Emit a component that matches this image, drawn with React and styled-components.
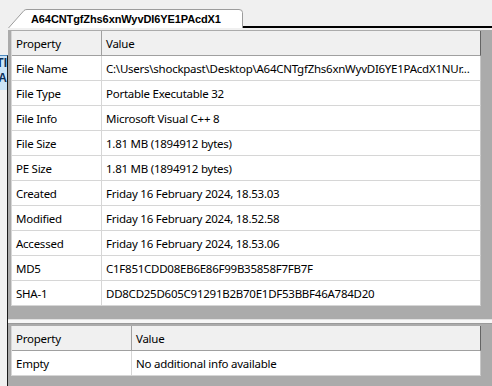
import React from 'react'
import styled, { createGlobalStyle } from 'styled-components'

const GlobalStyle = createGlobalStyle`
  html, body {
    margin: 0;
    padding: 0;
    background: #f0f0f0;
    overflow: hidden;
  }
  * { box-sizing: border-box; }
`

const rows = [
  ['File Name', 'C:\\Users\\shockpast\\Desktop\\A64CNTgfZhs6xnWyvDI6YE1PAcdX1NUr...'],
  ['File Type', 'Portable Executable 32'],
  ['File Info', 'Microsoft Visual C++ 8'],
  ['File Size', '1.81 MB (1894912 bytes)'],
  ['PE Size', '1.81 MB (1894912 bytes)'],
  ['Created', 'Friday 16 February 2024, 18.53.03'],
  ['Modified', 'Friday 16 February 2024, 18.52.58'],
  ['Accessed', 'Friday 16 February 2024, 18.53.06'],
  ['MD5', 'C1F851CDD08EB6E86F99B35858F7FB7F'],
  ['SHA-1', 'DD8CD25D605C91291B2B70E1DF53BBF46A784D20'],
]

const extra = [['Empty', 'No additional info available']]

export default function App() {
  return (
    <>
      <GlobalStyle />
      <Window>
        <LeftStrip>
          <StripSpacer />
          <HiddenPane>
            <HiddenLabel>
              <span>TI</span>
              <span>A</span>
            </HiddenLabel>
          </HiddenPane>
        </LeftStrip>
        <Main>
          <TabBar>
            <Tab>
              <TabShape viewBox="0 0 235 20" preserveAspectRatio="none">
                <path d="M0.5 20 L16 2.5 Q17 1.5 19 1.5 L231 1.5 Q234.5 1.5 234.5 4.5 L234.5 20" fill="#fff" stroke="#9c9c9c" />
              </TabShape>
              <TabText>A64CNTgfZhs6xnWyvDI6YE1PAcdX1</TabText>
            </Tab>
            <TabFill />
          </TabBar>
          <PageGap />
          <Panel $bottom={13}>
            <PropTable rows={rows} keyWidth={90} />
          </Panel>
          <Splitter />
          <Panel $top={2} $grow>
            <PropTable rows={extra} keyWidth={120} />
          </Panel>
        </Main>
      </Window>
    </>
  )
}

const PropTable = ({ rows, keyWidth }) => (
  <Grid $keyWidth={keyWidth}>
    <Cell $head>Property</Cell>
    <Cell $head $last>Value</Cell>
    {rows.map(([k, v]) => (
      <React.Fragment key={k}>
        <Cell>{k}</Cell>
        <Cell $last>{v}</Cell>
      </React.Fragment>
    ))}
  </Grid>
)

const Window = styled.div`
  display: flex;
  width: 492px;
  height: 386px;
  overflow: hidden;
  font-family: "Noto Sans", "Open Sans", sans-serif;
  font-size: 11.5px;
  letter-spacing: -0.25px;
  color: #000;
`

const LeftStrip = styled.div`
  width: 8px;
  display: flex;
  flex-direction: column;
`

const StripSpacer = styled.div`
  height: 55px;
`

const HiddenPane = styled.div`
  flex: 1;
  border-right: 1px solid #1a1a1a;
  border-top: 1px solid #4d8ac0;
  overflow: hidden;
  display: flex;
  flex-direction: column;
`

const HiddenLabel = styled.div`
  height: 34px;
  background: #cce4f7;
  display: flex;
  flex-direction: column;
  align-items: flex-end;
  font-family: "Liberation Sans", sans-serif;
  font-weight: bold;
  font-size: 12px;
  letter-spacing: 0;
  line-height: 15px;
  color: #0b2f5a;
  white-space: nowrap;
`

const Main = styled.div`
  flex: 1;
  display: flex;
  flex-direction: column;
  min-width: 0;
`

const TabBar = styled.div`
  display: flex;
  align-items: flex-end;
  height: 28px;
`

const Tab = styled.div`
  position: relative;
  width: 235px;
  height: 20px;
  display: flex;
  align-items: center;
  padding-left: 23px;
`

const TabShape = styled.svg`
  position: absolute;
  inset: 0;
  width: 100%;
  height: 100%;
`

const TabText = styled.span`
  position: relative;
  font-family: "Liberation Sans", Arial, sans-serif;
  font-weight: bold;
  font-size: 11px;
  letter-spacing: -0.1px;
  padding-top: 1px;
`

const TabFill = styled.div`
  flex: 1;
  height: 28px;
  border-bottom: 2px solid #000;
`

const PageGap = styled.div`
  height: 2px;
  background: #f0f0f0;
`

const Panel = styled.div`
  background: #ababab;
  padding: ${p => p.$top || 1}px 11px ${p => p.$bottom || 0}px 3px;
  flex: ${p => (p.$grow ? 1 : 'none')};
`

const Splitter = styled.div`
  height: 5px;
  background: #f7f7f7;
  border-top: 1px solid #e2e2e2;
  border-bottom: 1px solid #9a9a9a;
`

const Grid = styled.div`
  display: grid;
  grid-template-columns: ${p => p.$keyWidth}px 1fr;
  background: #fff;
  border-left: 1px solid #d6d6d6;
`

const Cell = styled.div`
  height: 25px;
  display: flex;
  align-items: center;
  padding: 0 4px;
  white-space: nowrap;
  overflow: hidden;
  background: ${p => (p.$head ? '#f0f0f0' : '#fff')};
  border-bottom: 1px solid ${p => (p.$head ? '#a0a0a0' : '#d6d6d6')};
  border-right: 1px solid ${p =>
    p.$head ? (p.$last ? '#646464' : '#a0a0a0') : p.$last ? '#c8c8c8' : '#d6d6d6'};
`
